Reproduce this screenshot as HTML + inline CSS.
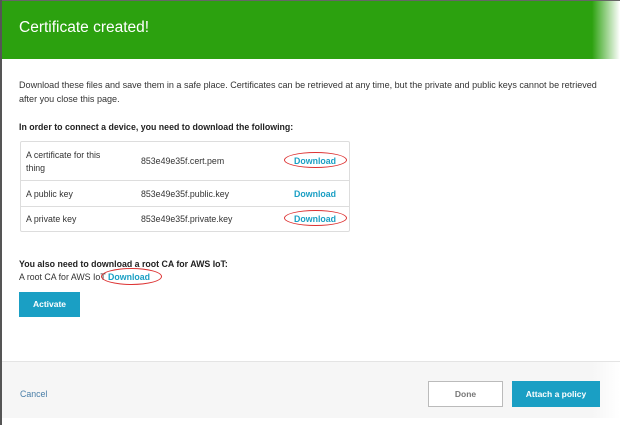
<!DOCTYPE html>
<html><head><style>
body{margin:0;width:620px;height:425px;overflow:hidden;background:#fff;font-family:"Liberation Sans",sans-serif;position:relative}
.lb{position:absolute;left:0;top:0;width:2px;height:425px;background:#555}
.tb{position:absolute;left:0;top:0;width:620px;height:1px;background:#666}
.hdr{position:absolute;left:2px;top:1px;width:618px;height:58px;background:linear-gradient(to right,#2ca10f 0,#2ca10f 590px,#fff 618px)}
.hdr span{position:absolute;left:17px;top:18px;color:#fff;font-size:15.5px}
.t{position:absolute;font-size:8.8px;color:#333;white-space:nowrap}
.b{font-weight:bold;color:#222}
.tbl{position:absolute;left:20px;top:141px;width:328px;height:89px;border:1px solid #ddd;border-radius:2px}
.row{position:absolute;left:0;width:328px;border-top:1px solid #ddd}
.dl{position:absolute;color:#1a9fc4;font-weight:bold;font-size:8.8px}
.ov{position:absolute;border:1.5px solid #d33;border-radius:50%}
.btn{position:absolute;font-size:8.5px;font-weight:bold;text-align:center;box-sizing:border-box}
.ft{position:absolute;left:2px;top:361px;width:618px;height:56px;background:linear-gradient(to right,#f6f6f6 0,#f6f6f6 590px,#fff 618px);border-top:1px solid #e4e4e4}
</style></head><body>
<div class="hdr"><span>Certificate created!</span></div>
<div class="tb"></div><div class="lb"></div>
<div class="t" style="left:19px;top:80px;font-size:9.05px">Download these files and save them in a safe place. Certificates can be retrieved at any time, but the private and public keys cannot be retrieved</div>
<div class="t" style="left:19px;top:94px;font-size:9.05px">after you close this page.</div>
<div class="t b" style="left:19px;top:122px">In order to connect a device, you need to download the following:</div>
<div class="tbl">
<div class="row" style="top:38px"></div><div class="row" style="top:64px"></div>
</div>
<div class="t" style="left:26px;top:150px">A certificate for this</div>
<div class="t" style="left:26px;top:163px">thing</div>
<div class="t" style="left:141px;top:156px">853e49e35f.cert.pem</div>
<div class="t" style="left:26px;top:189px">A public key</div>
<div class="t" style="left:141px;top:189px">853e49e35f.public.key</div>
<div class="t" style="left:26px;top:214px">A private key</div>
<div class="t" style="left:141px;top:214px">853e49e35f.private.key</div>
<div class="dl" style="left:294px;top:156px">Download</div>
<div class="ov" style="left:284px;top:152px;width:61px;height:14px"></div>
<div class="dl" style="left:294px;top:189px">Download</div>
<div class="dl" style="left:294px;top:214px">Download</div>
<div class="ov" style="left:284px;top:210px;width:61px;height:14px"></div>
<div class="t b" style="left:19px;top:259px">You also need to download a root CA for AWS IoT:</div>
<div class="t" style="left:19px;top:272px">A root CA for AWS IoT</div>
<div class="dl" style="left:108px;top:272px">Download</div>
<div class="ov" style="left:101px;top:268px;width:59px;height:15px"></div>
<div class="btn" style="left:19px;top:292px;width:61px;height:25px;background:#1a9fc4;color:#fff;line-height:25px">Activate</div>
<div class="ft"></div>
<div class="t" style="left:20px;top:389px;color:#4a7fa8">Cancel</div>
<div class="btn" style="left:428px;top:381px;width:75px;height:26px;border:1px solid #bbb;background:#fff;color:#777;line-height:24px">Done</div>
<div class="btn" style="left:512px;top:381px;width:88px;height:26px;background:#1a9fc4;color:#fff;line-height:26px">Attach a policy</div>
</body></html>
